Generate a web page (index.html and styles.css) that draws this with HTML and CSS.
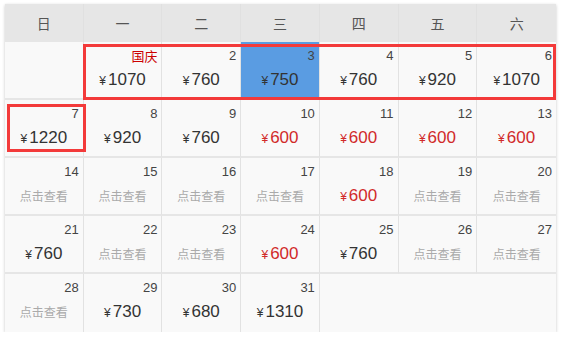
FILE: index.html
```html
<!DOCTYPE html>
<html lang="zh">
<head>
<meta charset="utf-8">
<link rel="stylesheet" href="styles.css">
</head>
<body>
<div class="cal">
  <div class="head">
    <div>日</div><div>一</div><div>二</div><div>三</div><div>四</div><div>五</div><div>六</div>
  </div>
  <div class="grid">
    <div class="cell empty"></div>
    <div class="cell"><span class="d holiday">国庆</span><span class="p"><i>¥</i>1070</span></div>
    <div class="cell"><span class="d">2</span><span class="p"><i>¥</i>760</span></div>
    <div class="cell sel"><span class="d">3</span><span class="p"><i>¥</i>750</span></div>
    <div class="cell"><span class="d">4</span><span class="p"><i>¥</i>760</span></div>
    <div class="cell"><span class="d">5</span><span class="p"><i>¥</i>920</span></div>
    <div class="cell"><span class="d">6</span><span class="p"><i>¥</i>1070</span></div>

    <div class="cell"><span class="d">7</span><span class="p"><i>¥</i>1220</span></div>
    <div class="cell"><span class="d">8</span><span class="p"><i>¥</i>920</span></div>
    <div class="cell"><span class="d">9</span><span class="p"><i>¥</i>760</span></div>
    <div class="cell"><span class="d">10</span><span class="p low"><i>¥</i>600</span></div>
    <div class="cell"><span class="d">11</span><span class="p low"><i>¥</i>600</span></div>
    <div class="cell"><span class="d">12</span><span class="p low"><i>¥</i>600</span></div>
    <div class="cell"><span class="d">13</span><span class="p low"><i>¥</i>600</span></div>

    <div class="cell"><span class="d">14</span><span class="q">点击查看</span></div>
    <div class="cell"><span class="d">15</span><span class="q">点击查看</span></div>
    <div class="cell"><span class="d">16</span><span class="q">点击查看</span></div>
    <div class="cell"><span class="d">17</span><span class="q">点击查看</span></div>
    <div class="cell"><span class="d">18</span><span class="p low"><i>¥</i>600</span></div>
    <div class="cell"><span class="d">19</span><span class="q">点击查看</span></div>
    <div class="cell"><span class="d">20</span><span class="q">点击查看</span></div>

    <div class="cell"><span class="d">21</span><span class="p"><i>¥</i>760</span></div>
    <div class="cell"><span class="d">22</span><span class="q">点击查看</span></div>
    <div class="cell"><span class="d">23</span><span class="q">点击查看</span></div>
    <div class="cell"><span class="d">24</span><span class="p low"><i>¥</i>600</span></div>
    <div class="cell"><span class="d">25</span><span class="p"><i>¥</i>760</span></div>
    <div class="cell"><span class="d">26</span><span class="q">点击查看</span></div>
    <div class="cell"><span class="d">27</span><span class="q">点击查看</span></div>

    <div class="cell"><span class="d">28</span><span class="q">点击查看</span></div>
    <div class="cell"><span class="d">29</span><span class="p"><i>¥</i>730</span></div>
    <div class="cell"><span class="d">30</span><span class="p"><i>¥</i>680</span></div>
    <div class="cell"><span class="d">31</span><span class="p"><i>¥</i>1310</span></div>
  </div>
  <div class="mark mark-week"></div>
  <div class="mark mark-day"></div>
</div>
</body>
</html>
```
FILE: styles.css
```css
html, body {
  margin: 0;
  padding: 0;
  background: #ffffff;
}
body {
  padding: 4px 6px 0 5px;
  font-family: "Liberation Sans", "Noto Sans CJK SC", sans-serif;
}
.cal {
  position: relative;
  width: 551px;
  background: #f9f9f9;
  box-shadow: 0 1px 3px rgba(0, 0, 0, 0.22);
}
.head {
  display: grid;
  grid-template-columns: repeat(7, 1fr);
  height: 38px;
  background: #e6e6e6;
}
.head div {
  display: flex;
  align-items: center;
  justify-content: center;
  font-family: "Noto Sans CJK SC", sans-serif;
  font-size: 14px;
  color: #555;
  border-right: 1px solid #e0e0e0;
}
.head div:last-child { border-right: none; }
.grid {
  display: grid;
  grid-template-columns: repeat(7, 1fr);
  grid-auto-rows: 58px;
}
.cell {
  display: flex;
  flex-direction: column;
  align-items: center;
  padding-top: 7px;
  border-right: 1px solid #e2e2e2;
  border-bottom: 2px solid #e6e6e6;
  box-sizing: border-box;
}
.cell:nth-child(7n) { border-right: none; }
.grid .cell:nth-last-child(-n+4) { border-bottom: none; }
.cell.sel {
  background: #5a9ce2;
}
.d {
  align-self: flex-end;
  padding-right: 4px;
  font-size: 13px;
  line-height: 14px;
  color: #444;
}
.d.holiday {
  font-family: "Noto Sans CJK SC", sans-serif;
  color: #c00;
  font-size: 13px;
}
.p {
  margin-top: 6px;
  font-size: 17px;
  line-height: 22px;
  color: #333;
}
.p i {
  font-style: normal;
  font-size: 12px;
  margin-right: 2px;
}
.p.low { color: #d12a2a; }
.q {
  margin-top: 8px;
  font-family: "Noto Sans CJK SC", sans-serif;
  font-size: 12px;
  line-height: 18px;
  color: #aaa;
}
.mark {
  position: absolute;
  border: 3px solid #f33a3a;
  box-sizing: border-box;
  pointer-events: none;
}
.mark-week {
  left: 78px;
  top: 40px;
  width: 473px;
  height: 56px;
}
.mark-day {
  left: 2px;
  top: 100px;
  width: 79px;
  height: 48px;
}
```
